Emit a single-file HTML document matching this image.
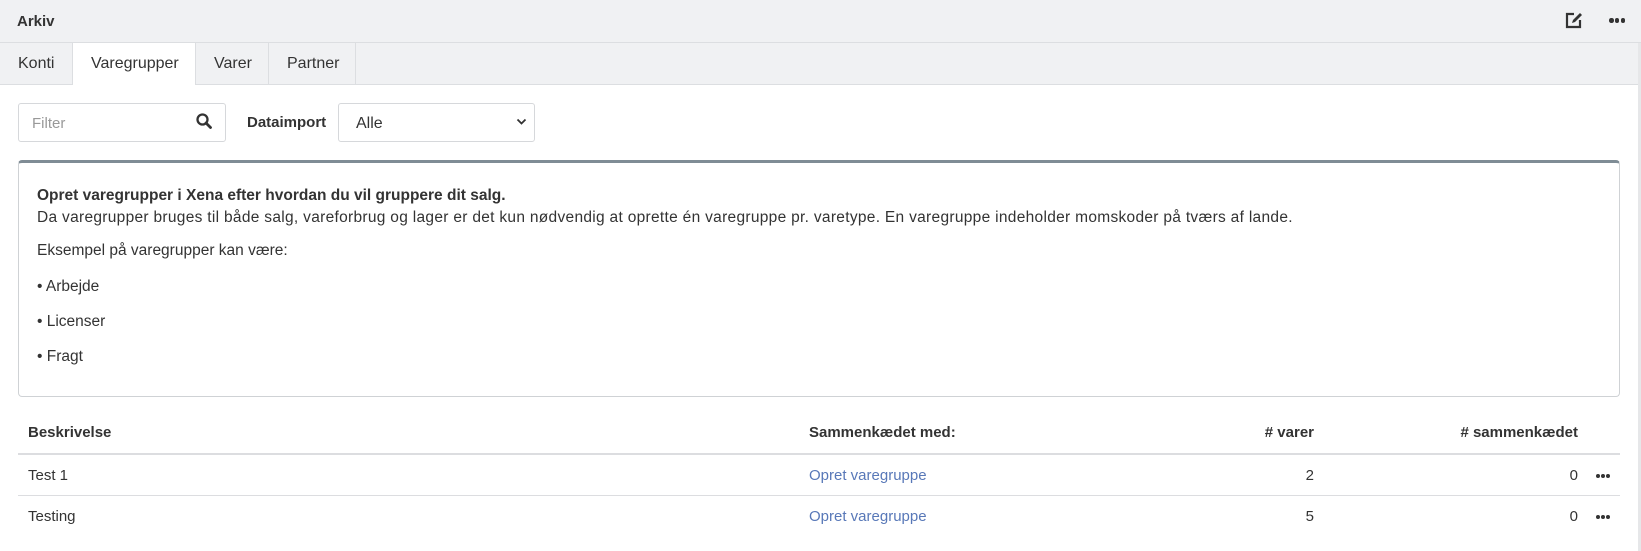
<!DOCTYPE html>
<html><head><meta charset="utf-8"><style>
*{margin:0;padding:0;box-sizing:border-box}
body{width:1641px;height:551px;background:#fff;font-family:"Liberation Sans",sans-serif;color:#333;position:relative;overflow:hidden;font-size:15px}
.a{position:absolute;white-space:nowrap;line-height:20px}
.b{font-weight:bold}
</style></head><body>
<div style="position:absolute;left:0;top:0;width:1641px;height:43px;background:#f0f1f3;border-bottom:1px solid #dcdee1"></div>
<div class="a b" style="left:17px;top:12px;font-size:15px;color:#333">Arkiv</div>
<svg style="position:absolute;left:1565px;top:11px" width="19" height="18" viewBox="0 0 19 18"><path d="M9 3H2v13h13V9" fill="none" stroke="#333" stroke-width="2.2"/><path d="M7 12l1-3 7-7 2 2-7 7z" fill="#333"/></svg>
<div style="position:absolute;left:1609px;top:18px;width:16px;height:5px;display:flex;justify-content:space-between"><i style="width:4.5px;height:4.5px;border-radius:50%;background:#333"></i><i style="width:4.5px;height:4.5px;border-radius:50%;background:#333"></i><i style="width:4.5px;height:4.5px;border-radius:50%;background:#333"></i></div>
<div style="position:absolute;left:0;top:43px;width:1641px;height:42px;background:#f0f1f3;border-bottom:1px solid #dcdee1"></div>
<div style="position:absolute;left:72px;top:43px;width:124px;height:42px;background:#fff;border-left:1px solid #dcdee1;border-right:1px solid #dcdee1"></div>
<div style="position:absolute;left:268px;top:43px;width:1px;height:41px;background:#dcdee1"></div>
<div style="position:absolute;left:355px;top:43px;width:1px;height:41px;background:#dcdee1"></div>
<div class="a" style="left:18px;top:54px;font-size:16px">Konti</div>
<div class="a" style="left:91px;top:54px;font-size:16px">Varegrupper</div>
<div class="a" style="left:214px;top:54px;font-size:16px">Varer</div>
<div class="a" style="left:287px;top:54px;font-size:16px">Partner</div>
<div style="position:absolute;left:1638px;top:43px;width:3px;height:508px;background:#e6e7e9"></div>
<div style="position:absolute;left:18px;top:103px;width:208px;height:39px;border:1px solid #d6d8db;border-radius:3px"></div>
<div class="a" style="left:32px;top:114px;color:#999">Filter</div>
<svg style="position:absolute;left:196px;top:113px" width="16" height="17" viewBox="0 0 16 17"><circle cx="6.5" cy="6.5" r="5" fill="none" stroke="#333" stroke-width="2.3"/><path d="M10 10l4.5 4.5" stroke="#333" stroke-width="2.8" stroke-linecap="round"/></svg>
<div class="a b" style="left:247px;top:113px">Dataimport</div>
<div style="position:absolute;left:338px;top:103px;width:197px;height:39px;border:1px solid #d6d8db;border-radius:3px"></div>
<div class="a" style="left:356px;top:114px;font-size:16px">Alle</div>
<svg style="position:absolute;left:516px;top:118px" width="11" height="8" viewBox="0 0 11 8"><path d="M1.5 1.5l4 4 4-4" fill="none" stroke="#333" stroke-width="1.8"/></svg>
<div style="position:absolute;left:18px;top:160px;width:1602px;height:237px;border:1px solid #cfd2d5;border-top:3px solid #7f8c95;border-radius:4px"></div>
<div class="a b" style="left:37px;top:186px;font-size:15.5px">Opret varegrupper i Xena efter hvordan du vil gruppere dit salg.</div>
<div class="a" style="left:37px;top:208px;font-size:15.5px;letter-spacing:0.3px">Da varegrupper bruges til både salg, vareforbrug og lager er det kun nødvendig at oprette én varegruppe pr. varetype. En varegruppe indeholder momskoder på tværs af lande.</div>
<div class="a" style="left:37px;top:241px;font-size:15.5px">Eksempel på varegrupper kan være:</div>
<div class="a" style="left:37px;top:277px;font-size:15.5px">• Arbejde</div>
<div class="a" style="left:37px;top:312px;font-size:15.5px">• Licenser</div>
<div class="a" style="left:37px;top:347px;font-size:15.5px">• Fragt</div>
<div class="a b" style="left:28px;top:423px">Beskrivelse</div>
<div class="a b" style="left:809px;top:423px">Sammenkædet med:</div>
<div class="a b" style="right:327px;top:423px">#&nbsp;varer</div>
<div class="a b" style="right:63px;top:423px"># sammenkædet</div>
<div style="position:absolute;left:18px;top:453px;width:1602px;height:2px;background:#dcdde0"></div>
<div class="a" style="left:28px;top:466px">Test 1</div>
<div class="a" style="left:809px;top:466px;color:#5878b8">Opret varegruppe</div>
<div class="a" style="right:327px;top:466px">2</div>
<div class="a" style="right:63px;top:466px">0</div>
<div style="position:absolute;left:18px;top:495px;width:1602px;height:1px;background:#dcdde0"></div>
<div class="a" style="left:28px;top:507px">Testing</div>
<div class="a" style="left:809px;top:507px;color:#5878b8">Opret varegruppe</div>
<div class="a" style="right:327px;top:507px">5</div>
<div class="a" style="right:63px;top:507px">0</div>
<div style="position:absolute;left:1596px;top:474px;width:14px;height:4px;display:flex;justify-content:space-between"><i style="width:4px;height:4px;border-radius:50%;background:#333"></i><i style="width:4px;height:4px;border-radius:50%;background:#333"></i><i style="width:4px;height:4px;border-radius:50%;background:#333"></i></div>
<div style="position:absolute;left:1596px;top:515px;width:14px;height:4px;display:flex;justify-content:space-between"><i style="width:4px;height:4px;border-radius:50%;background:#333"></i><i style="width:4px;height:4px;border-radius:50%;background:#333"></i><i style="width:4px;height:4px;border-radius:50%;background:#333"></i></div>
</body></html>
